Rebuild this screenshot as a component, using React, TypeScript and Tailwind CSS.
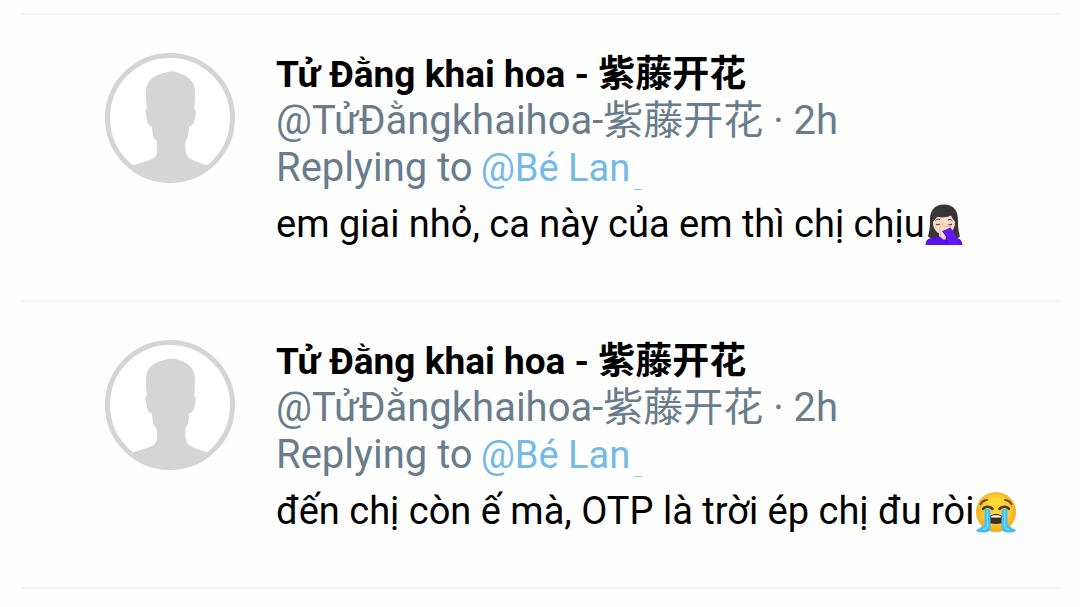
import React from 'react';

const FacepalmIcon = () => (
    <svg viewBox="0 0 38 42" className="w-[38px] h-[42px] flex-shrink-0" role="img" aria-label="Woman facepalming">
        <path d="M19 0.5C9 0.5 5 7 5 16c0 7-.6 11-2 16.500 4 3 9 3.500 16 3.500s13-.5 16-3.500C33.500 27 33 23 33 16 33 7 29 .5 19 .5z" fill="#3a3638" />
        <path d="M14 26h10v9H14z" fill="#e5c4ad" />
        <path d="M19 8.500C12 10 8 13 8 18.500 8 26 13 30.500 19 30.500S30 26 30 18.500C30 13 27 10 19 8.500z" fill="#f9ddc8" />
        <path d="M7 18.500C8 10 13 7 20 7s11 4 11.500 11.500C28.500 16.500 27 14 26 11.500c-5 2.500-11 2-14 1.500-1.500 2-3 4-5 5.500z" fill="#3a3638" />
        <path d="M10.500 16.500c1.500-1.500 3-1.500 4.500-.8M23 16c1.500-.8 3-.6 4.300.8" stroke="#3a3638" strokeWidth="1" fill="none" />
        <path d="M11 20c1 1 2.500 1 3.500 0M23.500 20c1 1 2.500 1 3.500 0" stroke="#594942" strokeWidth="1.200" fill="none" />
        <path d="M0.500 41c.3-5 3-7 8-7.500l6-1c2 2.500 7 2.500 9 0l6 1c5 .6 7.500 2.500 8 7.500z" fill="#5a12ea" />
        <path d="M16 32c-1.500-4-2-9 .5-13l2 3.500L25 21.500l-2 6-3 8c-2 0-3.500-1-4-3.500z" fill="#f9ddc8" stroke="#dfb197" strokeWidth=".8" />
        <path d="M17.500 27l8-3.500c3 4 5.500 8 7 13L32 41H22l-.5-8z" fill="#6617f5" />
        <path d="M17.500 27l4 5.500.5 8" fill="none" stroke="#4305bd" strokeWidth="1" />
    </svg>
);

const SobbingIcon = () => (
    <svg viewBox="0 0 42 42" className="w-[42px] h-[42px] flex-shrink-0" role="img" aria-label="Loudly crying face">
        <defs>
            <radialGradient id="sob-face" cx="50%" cy="45%" r="55%">
                <stop offset="50%" stopColor="#fdd835" />
                <stop offset="100%" stopColor="#f3a61c" />
            </radialGradient>
        </defs>
        <circle cx="21" cy="21" r="20" fill="url(#sob-face)" />
        <path d="M5.500 13.500c1-2.500 3.500-4.200 6.500-4.500M36.500 13.500c-1-2.500-3.500-4.200-6.500-4.500" stroke="#6b4425" strokeWidth="1.800" strokeLinecap="round" fill="none" />
        <path d="M8 18c2-3 7.500-3 9.500 0M24.500 18c2-3 7.500-3 9.500 0" stroke="#543420" strokeWidth="2.600" strokeLinecap="round" fill="none" />
        <path d="M14.500 32v-4c0-3.500 3-5 6.500-5s6.500 1.500 6.500 5v4c-4 1.200-9 1.200-13 0z" fill="#422b20" />
        <path d="M16 25.500c1-1.800 9-1.800 10 0v1H16z" fill="#fff" />
        <path d="M9.500 18.500c2-.8 4.200-.8 6 0v18c0 4-3 5-7 5-3.500 0-7-.5-7.500-2 1-1.500 3.500-1.500 4.500-3 1.500-1.500 4-1 4-4z" fill="#3fbff4" />
        <path d="M32.500 18.500c-2-.8-4.200-.8-6 0v18c0 4 3 5 7 5 3.500 0 7-.5 7.500-2-1-1.500-3.500-1.500-4.500-3-1.500-1.500-4-1-4-4z" fill="#3fbff4" />
        <path d="M12.500 19.500v15c0 2.500-2 3.500-5 4M29.500 19.500v15c0 2.500 2 3.500 5 4" stroke="#7cd7fb" strokeWidth="1.500" fill="none" />
    </svg>
);

const Avatar = () => (
    <svg viewBox="0 0 130 130" className="w-[130px] h-[130px] flex-shrink-0" role="img" aria-label="Profile picture">
        <circle cx="65" cy="65" r="62.500" fill="#fff" stroke="#d5d5d5" strokeWidth="5" />
        <path d="M66 18.500c-3 0-4 1-7 1.500-11 2-18 9-18 19 0 6 .3 12 .8 17-2 .5-1.500 4 .2 11 .6 4 1.500 6 5 6.500.5 7 1 12 4.500 14.500 1 7 .8 11-.5 14.500-2.500 5-13 6-25 10.500a62.500 62.500 0 0 0 78 0c-12-4.500-19-5.500-22-10.500-2-4-2-9-1.500-14.500 3-3 3-7.500 3.500-14.500 3.500-.5 4.500-2.500 5.500-6.500 1.700-7 2-10.500-.5-11 .8-5 1-11 1-17 0-10-6-15.500-15-18.500-3-1.500-6-2-9-2z" fill="#d5d5d5" />
    </svg>
);

interface TweetProps {
    name: string;
    handle: string;
    time: string;
    replyTo: string;
    text: string;
    emoji: React.ReactNode;
}

const Tweet = ({ name, handle, time, replyTo, text, emoji }: TweetProps) => (
    <article className="flex gap-[41px] pl-[84px] pt-9 pb-[52px] border-b-2 border-[#f4f5f5]">
        <div className="pt-0.5">
            <Avatar />
        </div>
        <div className="min-w-0 flex-1 text-[40px] leading-[47px] text-[#697c8b]">
            <h2 className="text-[37px] leading-[47px] font-bold text-black">{name}</h2>
            <p className="leading-[46px]">
                <a href="#profile">{handle}</a> · {time}
            </p>
            <p className="flex items-baseline gap-2">
                Replying to
                <a href="#reply" className="relative text-[38px] text-[#74bae7]">
                    {replyTo}
                    <span className="absolute left-full bottom-0.5 ml-1 w-2 h-px rounded-full bg-[#8cc9ec]" />
                </a>
            </p>
            <p className="flex items-center mt-[9px] text-[38px] leading-[47px] text-black whitespace-nowrap">
                {text}
                {emoji}
            </p>
        </div>
    </article>
);

const App: React.FC = () => {
    return (
        <main className="min-h-screen bg-[#fefefe] pt-[13px] font-['Roboto','Noto_Sans_CJK_SC',sans-serif]">
            <div className="ml-[21px] mr-[19px] border-t-2 border-[#f4f5f5]">
                <Tweet
                    name="Tử Đằng khai hoa - 紫藤开花"
                    handle="@TửĐằngkhaihoa-紫藤开花"
                    time="2h"
                    replyTo="@Bé Lan"
                    text="em giai nhỏ, ca này của em thì chị chịu"
                    emoji={<FacepalmIcon />}
                />
                <Tweet
                    name="Tử Đằng khai hoa - 紫藤开花"
                    handle="@TửĐằngkhaihoa-紫藤开花"
                    time="2h"
                    replyTo="@Bé Lan"
                    text="đến chị còn ế mà, OTP là trời ép chị đu ròi"
                    emoji={<SobbingIcon />}
                />
            </div>
        </main>
    );
};

export default App;
